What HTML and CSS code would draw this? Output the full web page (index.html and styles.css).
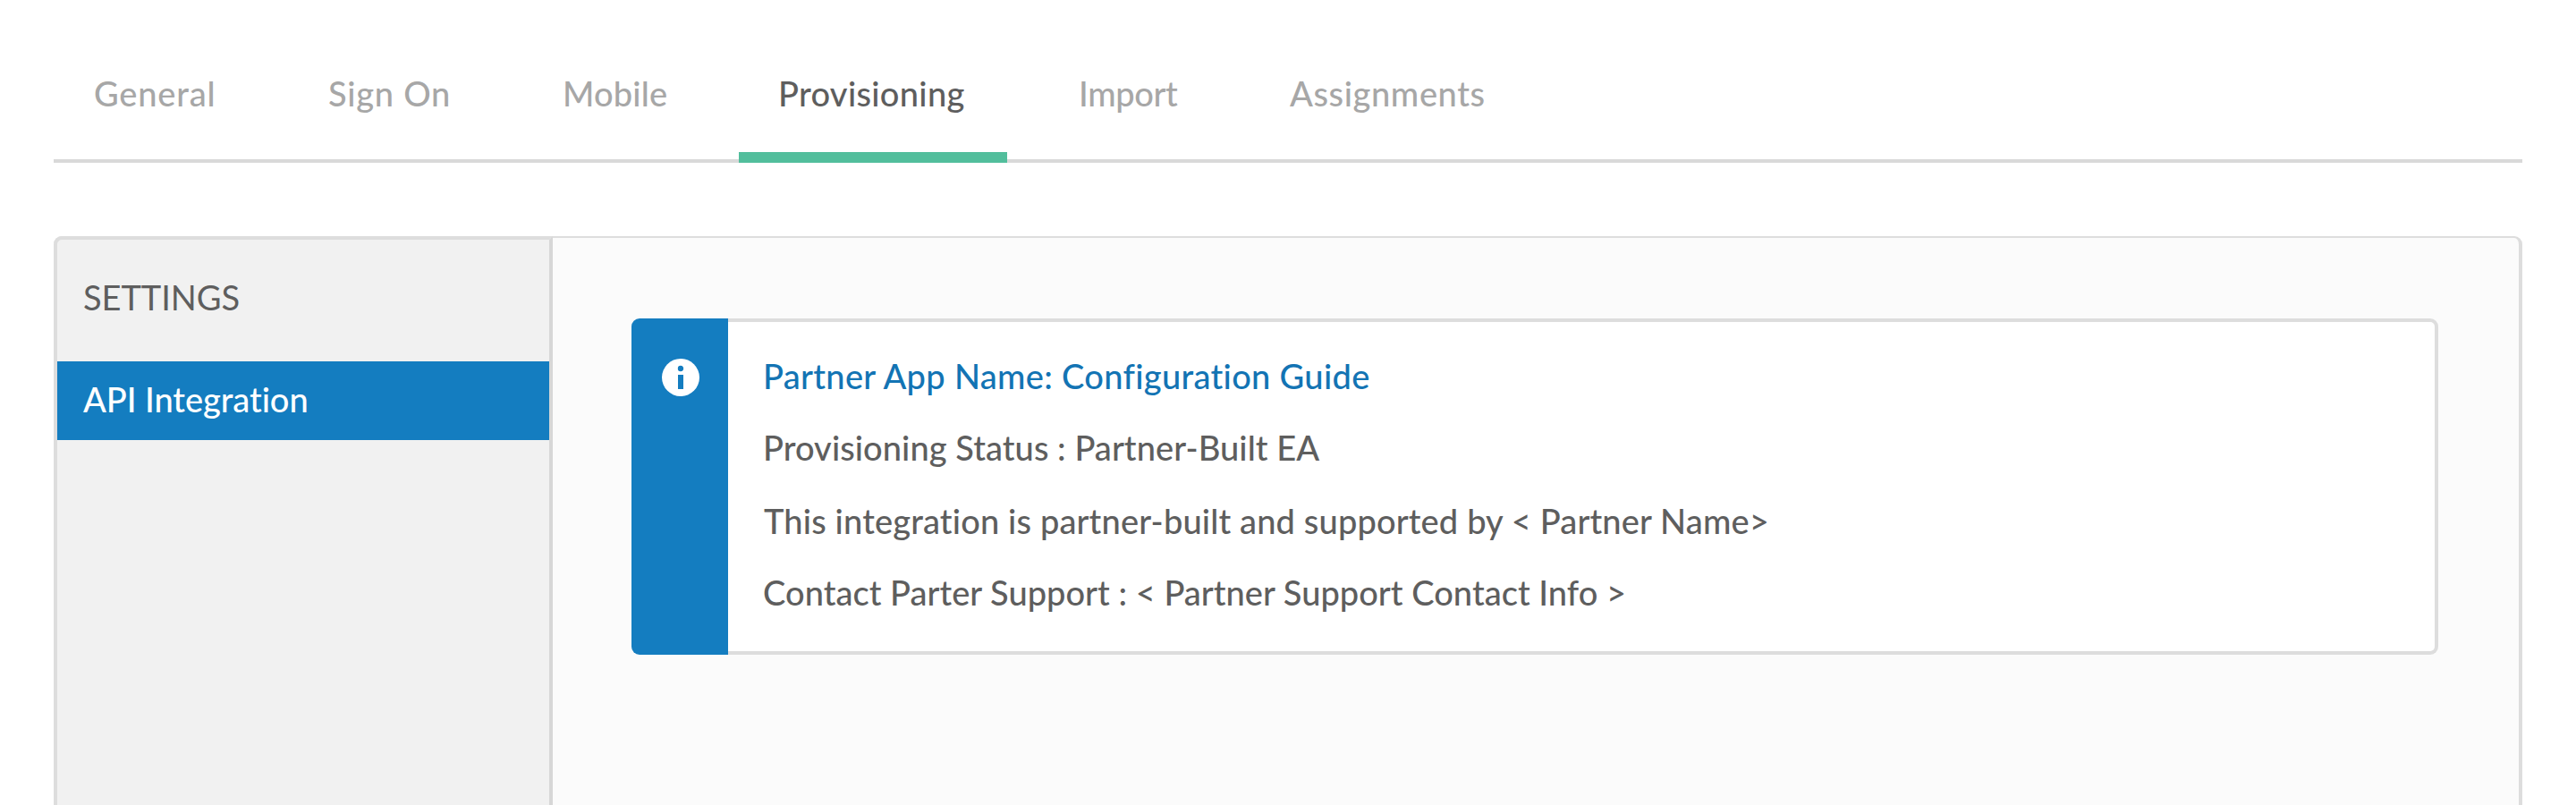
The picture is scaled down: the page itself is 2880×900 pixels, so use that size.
FILE: index.html
```html
<!DOCTYPE html>
<html lang="en">
<head>
<meta charset="utf-8">
<title>Provisioning</title>
<link rel="stylesheet" href="styles.css">
</head>
<body>
<nav class="tabs">
  <a class="tab tab-general">General</a>
  <a class="tab tab-sign-on">Sign On</a>
  <a class="tab tab-mobile">Mobile</a>
  <a class="tab tab-provisioning active">Provisioning</a>
  <a class="tab tab-import">Import</a>
  <a class="tab tab-assignments">Assignments</a>
</nav>
<main class="panel">
  <aside class="sidebar">
    <h2 class="sidebar-title">SETTINGS</h2>
    <a class="sidebar-item">API Integration</a>
  </aside>
  <section class="content">
    <div class="callout">
      <div class="callout-side">
        <svg class="info-icon" width="44" height="44" viewBox="0 0 44 44">
          <circle cx="22" cy="22" r="21" fill="#fff"/>
          <circle cx="22" cy="12" r="3.2" fill="#147dc0"/>
          <rect x="19" y="19" width="6" height="16" fill="#147dc0"/>
        </svg>
      </div>
      <div class="callout-body">
        <a class="line link">Partner App Name: Configuration Guide</a>
        <p class="line status">Provisioning Status : Partner-Built EA</p>
        <p class="line built">This integration is partner-built and supported by &lt; Partner Name&gt;</p>
        <p class="line contact">Contact Parter Support : &lt; Partner Support Contact Info &gt;</p>
      </div>
    </div>
  </section>
</main>
</body>
</html>
```
FILE: styles.css
```css
* { box-sizing: border-box; }
body {
  margin: 0;
  height: 900px;
  padding: 0 60px;
  overflow: hidden;
  display: flex;
  flex-direction: column;
  background: #fff;
  color: #5e5e5e;
  font: 500 38px/48px Lato, sans-serif;
  font-variant-ligatures: none;
}
.tabs {
  display: flex;
  flex: none;
  height: 182px;
  background: linear-gradient(#d9d9d9, #d9d9d9) bottom / 100% 4px no-repeat;
}
.tab {
  flex: none;
  padding: 80px 0 0 45px;
  margin-right: 40px;
  color: #a7a7a7;
  white-space: nowrap;
}
.tab-general { width: 223px; letter-spacing: 0.82px; }
.tab-sign-on { width: 221px; padding-left: 44px; letter-spacing: 0.75px; }
.tab-mobile { width: 202px; letter-spacing: 0.17px; }
.tab-provisioning { width: 300px; margin-right: 35px; padding-left: 44px; letter-spacing: 0.31px; }
.tab-import { width: 197px; letter-spacing: -0.37px; }
.tab-assignments { padding-left: 44px; letter-spacing: 0.6px; }
.active { color: #5e5e5e; border-bottom: 12px solid #52be9c; }

.panel {
  display: flex;
  flex: 1;
  margin-top: 82px;
  border: solid #dddddd;
  border-width: 2px 4px 0 0;
  border-radius: 9px 9px 0 0;
  background: #fbfbfb;
}
.sidebar {
  width: 558px;
  flex: none;
  margin-top: -2px;
  border: 4px solid #dddddd;
  border-right-color: #d7d7d7;
  border-bottom: 0;
  border-radius: 9px 0 0 0;
  background: #f1f1f1;
}
.sidebar-title {
  margin: 0;
  height: 136px;
  padding: 40px 0 0 29px;
  font-size: 38px;
  font-weight: 400;
  letter-spacing: -0.05px;
}
.sidebar-item {
  display: block;
  height: 88px;
  padding: 18px 0 0 29px;
  background: #147dc0;
  color: #fff;
  font-weight: 500;
  letter-spacing: -0.07px;
}
.content { flex: 1; padding: 90px 90px 0 88px; }
.callout {
  display: flex;
  height: 376px;
  border-radius: 9px;
}
.callout-side {
  flex: none;
  width: 108px;
  padding: 44px 0 0 33px;
  border-radius: 9px 0 0 9px;
  background: #147dc0;
}
.info-icon { display: block; }
.callout-body {
  flex: 1;
  padding: 36px 0 0 39px;
  border: 4px solid #dddddd;
  border-left: 0;
  border-radius: 0 9px 9px 0;
  background: #fff;
}
.line { display: block; margin: 0 0 32px; white-space: nowrap; }
.link { color: #1374b4; letter-spacing: 0.32px; }
.status { margin-bottom: 34px; letter-spacing: 0.06px; }
.built { margin-left: 1px; letter-spacing: 0.15px; }
.contact { letter-spacing: 0.03px; }
```
